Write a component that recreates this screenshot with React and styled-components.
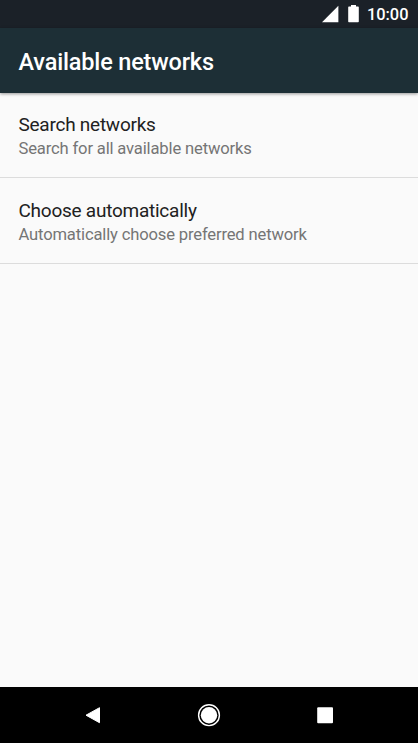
import React from 'react';
import styled, { createGlobalStyle } from 'styled-components';

const GlobalStyle = createGlobalStyle`
  body {
    margin: 0;
    font-family: Roboto, sans-serif;
  }
`;

const Screen = styled.div`
  display: flex;
  flex-direction: column;
  width: 100%;
  height: 100vh;
  background-color: #fafafa;
  overflow: hidden;
`;

const StatusBar = styled.div`
  box-sizing: border-box;
  display: flex;
  align-items: center;
  justify-content: flex-end;
  height: 28px;
  padding-right: 9.5px;
  background-color: #1b2128;
  color: #fff;
`;

const Clock = styled.span`
  margin-left: 7px;
  padding-top: 2px;
  font-size: 16.4px;
  font-weight: 500;
  line-height: 28px;
`;

const AppBar = styled.header`
  display: flex;
  align-items: center;
  height: 65px;
  padding: 3px 18.5px 0;
  background-color: #1d2f36;
  box-shadow: 0 1px 3px rgba(0, 0, 0, 0.4);
  box-sizing: border-box;
  z-index: 1;
`;

const Title = styled.h1`
  margin: 0;
  color: #fff;
  font-size: 23.5px;
  font-weight: 500;
  letter-spacing: -0.17px;
`;

const List = styled.main`
  flex: 1;
`;

const ListItem = styled.div`
  box-sizing: border-box;
  height: ${(props) => props.$height};
  padding: ${(props) => props.$top} 18.5px 0;
  border-bottom: 1px solid #dcdcdc;
`;

const ItemTitle = styled.div`
  color: #212121;
  font-size: 19px;
  letter-spacing: -0.25px;
  line-height: 24px;
`;

const ItemSummary = styled.div`
  color: #757575;
  font-size: 16.6px;
  letter-spacing: -0.16px;
  line-height: 23px;
`;

const NavBar = styled.nav`
  display: flex;
  align-items: center;
  justify-content: center;
  gap: 92px;
  height: 56px;
  background-color: #000;
`;

const items = [
  { title: 'Search networks', summary: 'Search for all available networks', height: '85px', top: '20px' },
  { title: 'Choose automatically', summary: 'Automatically choose preferred network', height: '86px', top: '21px' },
];

export default function App() {
  return (
    <Screen>
      <GlobalStyle />
      <StatusBar>
        <svg width="40" height="28" fill="#fff">
          <path d="M2 22.2L18.4 5.7V22.2Z" />
          <path d="M28.2 7.2q0-.7.7-.7H31V5h5v1.5h2.1q.7 0 .7.7V21.5q0 .8-.7.8H28.9q-.7 0-.7-.8Z" />
        </svg>
        <Clock>10:00</Clock>
      </StatusBar>
      <AppBar>
        <Title>Available networks</Title>
      </AppBar>
      <List>
        {items.map((item) => (
          <ListItem key={item.title} $height={item.height} $top={item.top}>
            <ItemTitle>{item.title}</ItemTitle>
            <ItemSummary>{item.summary}</ItemSummary>
          </ListItem>
        ))}
      </List>
      <NavBar>
        <svg width="24" height="24" fill="#fff">
          <path d="M5 12.2L18.5 4.7V19.7Z" stroke="#fff" strokeLinejoin="round" />
        </svg>
        <svg width="24" height="24">
          <circle cx="12" cy="12.2" r="10.4" fill="none" stroke="#fff" strokeWidth="1.4" />
          <circle cx="12" cy="12.2" r="8.2" fill="#fff" />
        </svg>
        <svg width="24" height="24">
          <rect x="4.2" y="4.2" width="15.8" height="16" rx="1" fill="#fff" />
        </svg>
      </NavBar>
    </Screen>
  );
}
